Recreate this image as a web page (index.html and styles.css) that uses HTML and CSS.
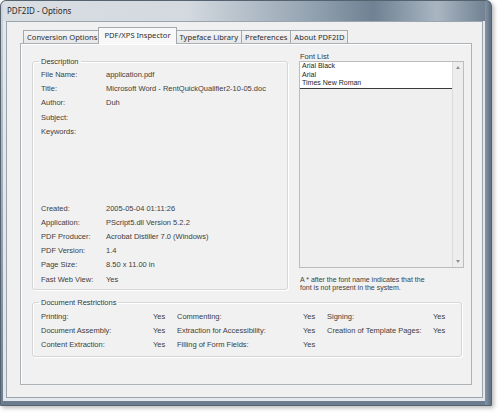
FILE: index.html
```html
<!DOCTYPE html>
<html>
<head>
<meta charset="utf-8">
<title>PDF2ID - Options</title>
<link rel="stylesheet" href="styles.css">
</head>
<body>
<div class="window">
  <div class="titlebar"><span class="title">PDF2ID - Options</span></div>
  <div class="client">
    <div class="tabs">
      <div class="tab">Conversion Options</div>
      <div class="tab active">PDF/XPS Inspector</div>
      <div class="tab">Typeface Library</div>
      <div class="tab">Preferences</div>
      <div class="tab">About PDF2ID</div>
    </div>
    <div class="panel">
      <div class="top">
        <fieldset class="group desc">
          <legend>Description</legend>
          <div class="rows">
            <span class="k">File Name:</span><span class="v">application.pdf</span>
            <span class="k">Title:</span><span class="v">Microsoft Word - RentQuickQualifier2-10-05.doc</span>
            <span class="k">Author:</span><span class="v">Duh</span>
            <span class="k">Subject:</span><span class="v"></span>
            <span class="k">Keywords:</span><span class="v"></span>
          </div>
          <div class="rows rows-bottom">
            <span class="k">Created:</span><span class="v">2005-05-04 01:11:26</span>
            <span class="k">Application:</span><span class="v">PScript5.dll Version 5.2.2</span>
            <span class="k">PDF Producer:</span><span class="v">Acrobat Distiller 7.0 (Windows)</span>
            <span class="k">PDF Version:</span><span class="v">1.4</span>
            <span class="k">Page Size:</span><span class="v">8.50 x 11.00 in</span>
            <span class="k">Fast Web View:</span><span class="v">Yes</span>
          </div>
        </fieldset>
        <div class="fonts">
          <div class="fonts-label">Font List</div>
          <div class="listbox">
            <div class="items">
              <div class="item">Arial Black</div>
              <div class="item">Arial</div>
              <div class="item">Times New Roman</div>
            </div>
            <div class="scrollbar"><span class="arrow up"></span><span class="arrow down"></span></div>
          </div>
          <p class="note">A * after the font name indicates that the<br>font is not present in the system.</p>
        </div>
      </div>
      <fieldset class="group restr">
        <legend>Document Restrictions</legend>
        <div class="restr-grid">
          <span>Printing:</span><span>Yes</span><span>Commenting:</span><span>Yes</span><span>Signing:</span><span>Yes</span>
          <span>Document Assembly:</span><span>Yes</span><span>Extraction for Accessibility:</span><span>Yes</span><span>Creation of Template Pages:</span><span>Yes</span>
          <span>Content Extraction:</span><span>Yes</span><span>Filling of Form Fields:</span><span>Yes</span><span></span><span></span>
        </div>
      </fieldset>
    </div>
  </div>
</div>
</body>
</html>
```

FILE: styles.css
```css
* { box-sizing: border-box; }
html, body { margin: 0; padding: 0; background: #ffffff; }
body {
  width: 500px;
  height: 415px;
  overflow: hidden;
  font-family: "Liberation Sans", Arial, sans-serif;
  color: #404040;
}

.window {
  width: 492px;
  height: 406px;
  border: 1px solid #55626f;
  border-radius: 6px 6px 0 0;
  padding: 0 8px 7px 5px;
  display: flex;
  flex-direction: column;
  background:
    linear-gradient(to bottom, #cfd5db, #6c7e90) left top / 2px 100% no-repeat,
    linear-gradient(to right, #8595a5, #5f7082) right top / 6px 100% no-repeat,
    linear-gradient(#6a7c8e, #6a7c8e) left bottom / 100% 4px no-repeat,
    linear-gradient(#e4e8ec, #e4e8ec) left 20px / 100% 100% no-repeat,
    linear-gradient(90deg, #d9dee3 0%, #d3d9df 38%, #97a6b4 62%, #6f8193 76%, #a9b6c2 89%, #6b7c8d 100%);
  box-shadow: 2px 2px 4px rgba(0, 0, 0, 0.28);
}

.titlebar {
  flex: none;
  height: 20px;
  padding-left: 1px;
  font-family: "Noto Sans", sans-serif;
  font-size: 8px;
  line-height: 20px;
  color: #2a2a2a;
}

.client {
  flex: 1;
  background: #f0f0f0;
  border: 1px solid #9aa5b0;
  padding: 5px 10px 12px 13px;
}

.tabs {
  display: flex;
  align-items: flex-end;
  height: 16px;
  padding-left: 3px;
}

.tab {
  height: 13px;
  padding: 0 3px;
  margin-right: -1px;
  border: 1px solid #a4a9ae;
  border-bottom: none;
  background: linear-gradient(#f4f4f4, #e6e6e6);
  font-family: "Noto Sans", sans-serif;
  font-size: 7.6px;
  line-height: 12px;
  color: #2e2e2e;
  white-space: nowrap;
}

.tab.active {
  position: relative;
  z-index: 1;
  height: 17px;
  margin: 0 -1px -1px -2px;
  padding: 0 5px;
  background: #f8f8f8;
  line-height: 15px;
}

.panel {
  height: 342px;
  border: 1px solid #adb2b7;
  background: #f1f1f1;
  box-shadow: inset 1px 1px 0 #ffffff;
  padding: 8px 0 0 11px;
  font-size: 7.5px;
}

.top {
  display: grid;
  grid-template-columns: 256px 165px;
  column-gap: 11px;
  align-items: start;
}

.group {
  margin: 0;
  min-width: 0;
  border: 1px solid #d6d6d6;
  border-radius: 3px;
  box-shadow: inset 1px 1px 0 #ffffff, 1px 1px 0 #ffffff;
}

.group legend {
  padding: 0 2px;
  margin-left: -2px;
  line-height: 9px;
  font-size: 7.5px;
  color: #363636;
}

.desc {
  margin-top: 5px;
  padding: 2px 8px 2px 8px;
}

.rows {
  display: grid;
  grid-template-columns: 65px auto;
  grid-auto-rows: 14.2px;
  line-height: 14.2px;
  white-space: nowrap;
}

.rows-bottom { margin-top: 62.8px; }

.fonts-label {
  line-height: 9px;
  padding-left: 1px;
  color: #363636;
}

.listbox {
  height: 207px;
  border: 1px solid #bcbcbc;
  background: #efefef;
  display: grid;
  grid-template-columns: 1fr 11px;
}

.items {
  align-self: start;
  background: #ffffff;
  border-bottom: 1px solid #3a3a3a;
  font-size: 7px;
  color: #262626;
}

.item {
  height: 8.5px;
  line-height: 8.5px;
  padding-left: 2px;
  white-space: nowrap;
}

.scrollbar {
  border-left: 1px solid #dcdcdc;
  background: #ededed;
  display: flex;
  flex-direction: column;
  justify-content: space-between;
  align-items: center;
  padding: 4px 0;
}

.arrow {
  width: 0;
  height: 0;
  border-left: 2.5px solid transparent;
  border-right: 2.5px solid transparent;
}
.arrow.up { border-bottom: 3px solid #909090; }
.arrow.down { border-top: 3px solid #909090; }

.note {
  margin: 8px 0 0;
  padding-left: 1px;
  font-size: 7px;
  line-height: 8px;
  white-space: nowrap;
}

.restr {
  width: 430px;
  margin-top: 6px;
  padding: 3px 8px 4px 8px;
}

.restr-grid {
  display: grid;
  grid-template-columns: 112px 24px 126px 24px 106px auto;
  grid-auto-rows: 14px;
  line-height: 14px;
  white-space: nowrap;
}
```
